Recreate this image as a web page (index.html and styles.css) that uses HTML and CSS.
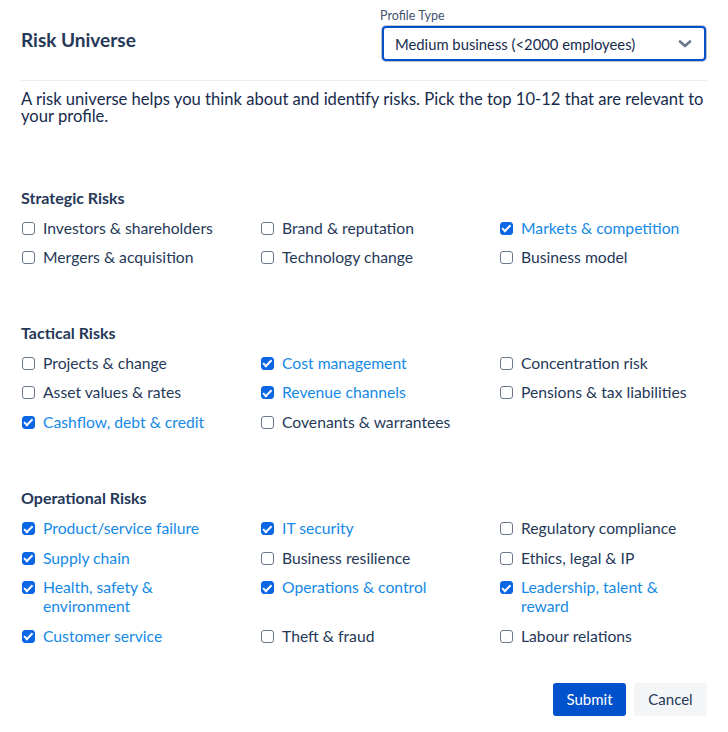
FILE: index.html
```html
<!DOCTYPE html>
<html lang="en">
<head>
<meta charset="utf-8">
<title>Risk Universe</title>
<link rel="stylesheet" href="styles.css">
</head>
<body>
<div class="page">
  <header class="header">
    <h1 class="title">Risk Universe</h1>
    <div class="field">
      <div class="field-label">Profile Type</div>
      <div class="select">
        <span class="select-value">Medium business (&lt;2000 employees)</span>
        <svg class="chevron" width="14" height="10" viewBox="0 0 14 10"><path d="M2 2.5 L7 7 L12 2.5" fill="none" stroke="#6b778c" stroke-width="2.6" stroke-linecap="round" stroke-linejoin="round"/></svg>
      </div>
    </div>
  </header>
  <hr class="divider">
  <p class="intro">A risk universe helps you think about and identify risks. Pick the top 10-12 that are relevant to<br>your profile.</p>

  <section class="group group-first">
    <h2 class="group-title">Strategic Risks</h2>
    <div class="grid">
      <div class="item"><span class="box"></span><span class="label">Investors &amp; shareholders</span></div>
      <div class="item"><span class="box"></span><span class="label">Brand &amp; reputation</span></div>
      <div class="item checked"><span class="box"></span><span class="label">Markets &amp; competition</span></div>
      <div class="item"><span class="box"></span><span class="label">Mergers &amp; acquisition</span></div>
      <div class="item"><span class="box"></span><span class="label">Technology change</span></div>
      <div class="item"><span class="box"></span><span class="label">Business model</span></div>
    </div>
  </section>

  <section class="group">
    <h2 class="group-title">Tactical Risks</h2>
    <div class="grid">
      <div class="item"><span class="box"></span><span class="label">Projects &amp; change</span></div>
      <div class="item checked"><span class="box"></span><span class="label">Cost management</span></div>
      <div class="item"><span class="box"></span><span class="label">Concentration risk</span></div>
      <div class="item"><span class="box"></span><span class="label">Asset values &amp; rates</span></div>
      <div class="item checked"><span class="box"></span><span class="label">Revenue channels</span></div>
      <div class="item"><span class="box"></span><span class="label">Pensions &amp; tax liabilities</span></div>
      <div class="item checked"><span class="box"></span><span class="label">Cashflow, debt &amp; credit</span></div>
      <div class="item"><span class="box"></span><span class="label">Covenants &amp; warrantees</span></div>
    </div>
  </section>

  <section class="group group-last">
    <h2 class="group-title">Operational Risks</h2>
    <div class="grid">
      <div class="item checked"><span class="box"></span><span class="label">Product/service failure</span></div>
      <div class="item checked"><span class="box"></span><span class="label">IT security</span></div>
      <div class="item"><span class="box"></span><span class="label">Regulatory compliance</span></div>
      <div class="item checked"><span class="box"></span><span class="label">Supply chain</span></div>
      <div class="item"><span class="box"></span><span class="label">Business resilience</span></div>
      <div class="item"><span class="box"></span><span class="label">Ethics, legal &amp; IP</span></div>
      <div class="item checked"><span class="box"></span><span class="label">Health, safety &amp;<br>environment</span></div>
      <div class="item checked"><span class="box"></span><span class="label">Operations &amp; control</span></div>
      <div class="item checked"><span class="box"></span><span class="label">Leadership, talent &amp;<br>reward</span></div>
      <div class="item checked"><span class="box"></span><span class="label">Customer service</span></div>
      <div class="item"><span class="box"></span><span class="label">Theft &amp; fraud</span></div>
      <div class="item"><span class="box"></span><span class="label">Labour relations</span></div>
    </div>
  </section>

  <div class="actions">
    <button class="btn btn-primary" type="button">Submit</button>
    <button class="btn btn-subtle" type="button">Cancel</button>
  </div>
</div>
</body>
</html>
```

FILE: styles.css
```css
* { box-sizing: border-box; }
html, body { margin: 0; padding: 0; background: #ffffff; }
body {
  font-family: Lato, "Noto Sans", "Liberation Sans", sans-serif;
  color: #253858;
  width: 728px;
}
.page { padding: 0 21px; }

.header {
  display: flex;
  justify-content: space-between;
  align-items: center;
  padding-top: 8px;
}
.title {
  margin: 0;
  font-size: 19px;
  font-weight: 700;
  color: #253858;
  padding-top: 10px;
}
.field { width: 327px; margin-right: -1px; }
.field-label {
  font-size: 12.5px;
  line-height: 16px;
  color: #42526e;
  margin-left: -1px;
}
.select {
  margin-top: 2px;
  height: 35px;
  border: 2px solid #0052cc;
  border-radius: 4px;
  box-shadow: 0 0 0 1px #c1c7d0;
  display: flex;
  align-items: center;
  justify-content: space-between;
  padding: 0 12px 0 11px;
  margin-left: 1px;
  margin-right: 2px;
}
.select-value { font-size: 14.8px; color: #172b4d; }
.chevron { display: block; }

.divider {
  border: 0;
  border-top: 1px solid #ebecf0;
  margin: 19px 0 0;
}
.intro {
  margin: 9.5px 0 0;
  font-size: 16.6px;
  line-height: 17.5px;
  color: #172b4d;
}

.group { margin-top: 55.5px; }
.group-first { margin-top: 62px; }
.group-last { margin-top: 56.5px; }
.group-title {
  margin: 0;
  font-size: 16px;
  line-height: 20px;
  font-weight: 700;
  color: #253858;
}
.grid {
  display: grid;
  grid-template-columns: 239px 239px 1fr;
  row-gap: 10.5px;
  margin-top: 11px;
}
.item {
  display: flex;
  align-items: flex-start;
  gap: 8px;
  padding-left: 1px;
}
.label {
  font-size: 15.7px;
  line-height: 19px;
  white-space: nowrap;
  color: #253858;
}
.box {
  flex: none;
  width: 13px;
  height: 13px;
  margin-top: 3px;
  border: 1.5px solid #6b778c;
  border-radius: 3px;
  background: #fff;
  position: relative;
}
.checked .label { color: #1589e6; }
.checked .box {
  background: #0b66e4;
  border-color: #0b66e4;
}
.checked .box::after {
  content: "";
  position: absolute;
  left: 3.2px;
  top: 0.6px;
  width: 3px;
  height: 6.5px;
  border: solid #fff;
  border-width: 0 2px 2px 0;
  transform: rotate(45deg);
}

.actions {
  display: flex;
  justify-content: flex-end;
  gap: 8px;
  margin-top: 37px;
}
.btn {
  width: 73px;
  height: 33px;
  border: 0;
  border-radius: 3px;
  font-family: inherit;
  font-size: 15px;
  cursor: pointer;
}
.btn-primary { background: #0052cc; color: #fff; }
.btn-subtle { background: #f4f5f7; color: #253858; }
```
